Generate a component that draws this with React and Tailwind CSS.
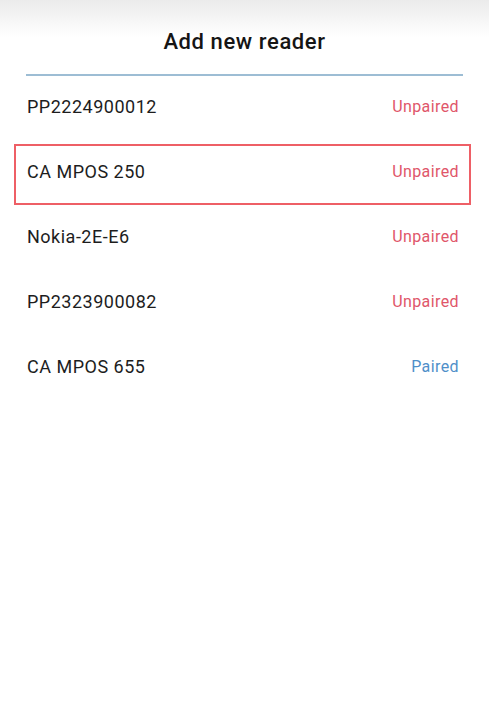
import React from "react";

const readers = [
  { name: "PP2224900012", paired: false },
  { name: "CA MPOS 250", paired: false, selected: true },
  { name: "Nokia-2E-E6", paired: false },
  { name: "PP2323900082", paired: false },
  { name: "CA MPOS 655", paired: true },
];

export default function App() {
  return (
    <div
      className="min-h-[711px] w-full bg-white"
      style={{ fontFamily: "Roboto, 'Liberation Sans', sans-serif" }}
    >
      {/* header */}
      <div className="bg-gradient-to-b from-[#ebebeb] via-white to-white pt-[28px] pb-[18px] text-center">
        <h1 className="text-[22px] leading-[28px] font-medium text-[#151515] tracking-[0.6px]">
          Add new reader
        </h1>
      </div>
      <div className="mx-[26px] h-[2px] bg-[#9dbdd4]" />

      {/* reader list */}
      <ul className="mt-[3px] flex flex-col gap-[4px]">
        {readers.map((r, i) => (
          <li
            key={i}
            className={
              r.selected
                ? "ml-[14px] mr-[18px] h-[61px] flex items-center justify-between pl-[11px] pr-[10px] border-2 border-[#ee5f66]"
                : "ml-[14px] mr-[18px] h-[61px] flex items-center justify-between pl-[11px] pr-[10px] border-2 border-transparent"
            }
          >
            <span className="text-[18px] leading-[22px] text-[#1d1d1d] tracking-[0.5px] pb-[6px]">
              {r.name}
            </span>
            <span
              className={
                r.paired
                  ? "text-[16px] leading-[20px] tracking-[0.4px] pb-[6px] text-[#4f8fc9]"
                  : "text-[16px] leading-[20px] tracking-[0.4px] pb-[6px] text-[#e0566a]"
              }
            >
              {r.paired ? "Paired" : "Unpaired"}
            </span>
          </li>
        ))}
      </ul>
    </div>
  );
}
